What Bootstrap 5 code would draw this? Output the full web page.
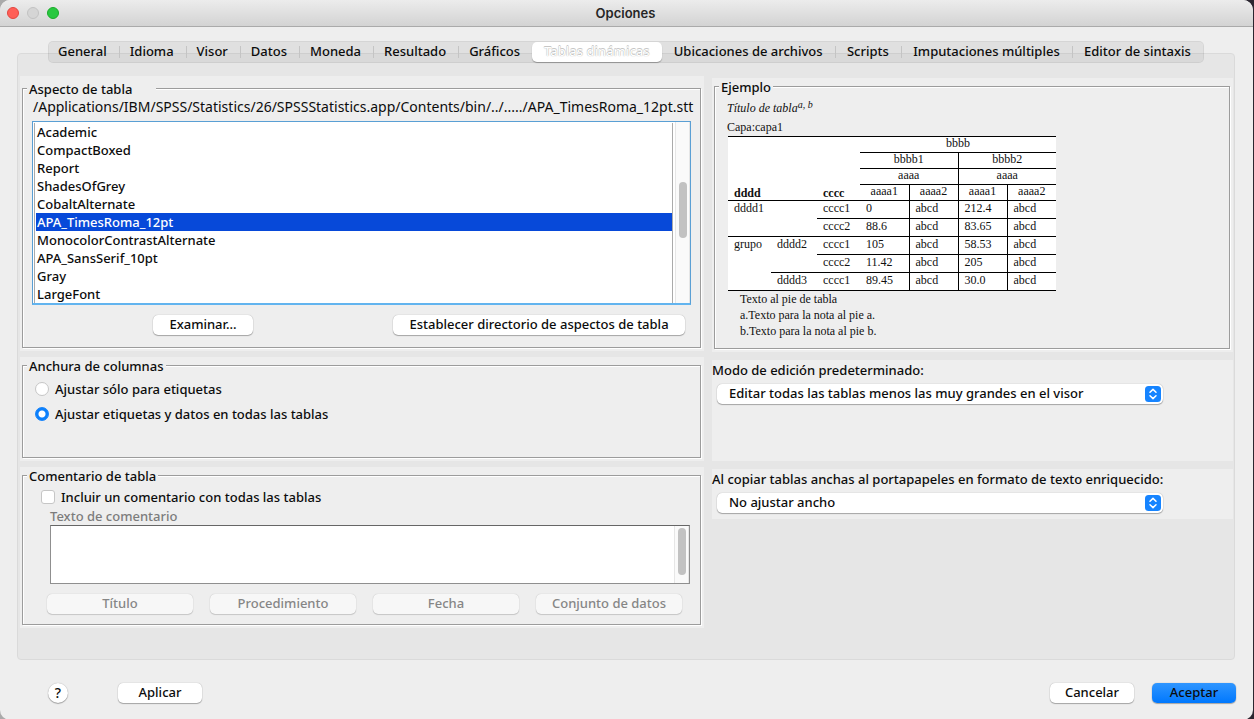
<!DOCTYPE html>
<html lang="es">
<head>
<meta charset="utf-8">
<meta name="viewport" content="width=device-width, initial-scale=1">
<title>Opciones</title>
<link href="https://cdn.jsdelivr.net/npm/bootstrap@5.3.0/dist/css/bootstrap.min.css" rel="stylesheet">
<style>
:root { --face: #eee; --line: #9c9c9c; --ink: #0c0c0c; }
body { background: linear-gradient(90deg, #aaa 50%, #2b2630 50%); color: var(--ink);
  font-family: "Noto Sans", "Open Sans", sans-serif; font-size: 13px; font-weight: 500; line-height: 18px; }
button, select, textarea, input { color: inherit; font: inherit; }
.window { background: var(--face); border-radius: 10px; margin-right: 1px; min-height: 100vh; overflow: hidden; }
.titlebar { height: 27px; background: linear-gradient(#ececec, #d3d3d3); border-bottom: 1px solid #aaa; padding: 0 7px; }
.titlebar h1 { font: 600 13px/26px Inter, "Liberation Sans", sans-serif; color: #262626; padding-right: 54px; }
.light { width: 12px; height: 12px; border-radius: 50%; border: 1px solid #c2c2c2; background: #d5d5d5; padding: 0; }
.light-close { background: #ff5f57; border-color: #e2463f; }
.light-zoom { background: #28c840; border-color: #1aab29; }

.tabstrip { margin: 14px 49px -10px 48px; height: 22px; background: rgba(0,0,0,.055); border: 1px solid rgba(0,0,0,.05); border-radius: 5px; z-index: 1; }
.tabstrip button { border: 0; background: none; padding: 0 12px 2px 11px; line-height: 18px; white-space: nowrap; position: relative; }
.tabstrip button:first-child { padding-left: 9px; }
.tabstrip button.active ~ button { flex: 1 1 auto; padding: 0 0 2px; }
.tabstrip button.parted::before { content: ""; position: absolute; left: 0; top: 4px; height: 12px; border-left: 1px solid #c4c4c4; }
.tabstrip button.active { padding: 0 12px 2px; background: #fff; border-radius: 5px; color: #fff; text-shadow: 0 0 1px #999, 0 -1px 0 #ccc; box-shadow: 0 1px 1px rgba(0,0,0,.3); }

.pane { margin: 0 18px 0 17px; background: #e6e6e6; border: 1px solid #dadada; border-radius: 4px; padding: 22px 1px 31px 2px; }
.halves { display: grid; grid-template-columns: minmax(0, 684fr) minmax(0, 521fr); gap: 8px; align-items: start; }
.left-half { gap: 6px; }
.right-half { gap: 8px; padding-top: 2px; }
.block { background: var(--face); }
.framed { padding: 0 3px 3px 2px; }
fieldset.etched { border: 1px solid var(--line); box-shadow: 1px 1px 0 #fff, inset 1px 1px 0 #fff; }
.etched legend { float: none; width: auto; margin: 0 0 0 4px; padding: 1px 2px 0; font-size: 13px; line-height: 16px; background: var(--face); }
.path { font-size: 14px; font-weight: 400; padding: 1px 0 0 10px; }

.listbox { border: 1px solid #5a9fd4; border-bottom: 2px solid #62b4ef; background: #fff; margin: 5px 9px 0; }
.listbox select { border: 0; border-left: 1px solid #aaa; border-right: 1px solid #aaa; border-radius: 0; margin: 1px 0 0 1px; padding: 0; height: 180px; overflow: hidden; background: #fff; outline: 0; scrollbar-width: none; }
.listbox select::-webkit-scrollbar { display: none; }
.listbox option { height: 18px; min-height: 18px; padding: 0 2px 0 1px; font-weight: 500; line-height: 18px; margin-left: 1px; }
.listbox option:checked { background: #0749d9 linear-gradient(#0749d9, #0749d9); color: #fff; }
.list-actions { padding: 10px 15px 12px 130px; }
.track { width: 15px; margin-left: 2px; background: #fafafa; border: 1px solid #e6e6e6; border-width: 0 1px; padding: 0 3px; }
.thumb { width: 8px; border-radius: 4px; background: #c2c2c2; }

.push { border: 0; border-radius: 5px; background: #fff; height: 20px; line-height: 18px; padding: 0 4px 2px; box-shadow: 0 0 1px rgba(0,0,0,.35), 0 1px 1px rgba(0,0,0,.28); white-space: nowrap; }
.push:disabled { background: #f7f7f7; color: #868686; box-shadow: 0 0 1px rgba(0,0,0,.25), 0 1px 1px rgba(0,0,0,.15); }
.push-84 { width: 84px; }
.push-100 { width: 100px; }
.push-292 { width: 292px; }
.push-main { background: linear-gradient(#2f96ff, #0078fe); }
.help { width: 20px; border-radius: 50%; font-size: 14px; padding: 0; }

.form-check-input.tick { width: 14px; height: 14px; margin: 0; float: none; border: 1px solid #c6c6c6; background-color: #fff; flex: none; }
.form-check-input.tick[type=checkbox] { border-radius: 3px; }
.form-check-input.tick:checked { border-color: #1583fb; background: radial-gradient(circle, #fff 3px, #0c80fc 4px); }
.tick + label { padding-left: 6px; }
.choices { gap: 7px; padding: 6px 12px 34px; }
.comment { padding: 4px 18px 10px; }
.comment-text { margin: 0 -8px 10px 9px; }
.hint { color: #7c7c7c; padding-top: 1px; }
.memo { border: 1px solid #8f8f8f; border-top-color: #666; background: #fff; height: 59px; }
.memo textarea { border: 0; resize: none; background: none; outline: 0; }
.four { display: grid; grid-template-columns: repeat(4, 1fr); gap: 17px; margin-left: 6px; }

.option-label { padding: 1px 0 5px; }
.popup { width: 446px; max-width: 100%; margin-left: 5px; }
.popup select { appearance: none; width: 100%; text-align: left; padding: 0 30px 2px 12px; }
.popup svg { position: absolute; right: 2px; top: 2px; pointer-events: none; }
.edit-mode { padding-bottom: 57px; }
.copy-mode { padding-bottom: 6px; }

.sample { font: 12px/17px "Liberation Serif", "Times New Roman", serif; padding: 5px 13px 9px 12px; color: #111; }
.sample sup { font-size: 10px; top: -4px; line-height: 1; }
.layer { padding-top: 2px; }
.pivot { width: 328px; margin-left: 1px; table-layout: fixed; border-collapse: collapse; background: #fff; line-height: 13px; }
.pivot th, .pivot td { padding: 0 0 0 6px; border: 0 solid #000; height: 16px; vertical-align: top; white-space: nowrap; }
.pivot th { font-weight: 400; text-align: center; padding: 0; }
.pivot th.stub { font-weight: 700; text-align: left; vertical-align: bottom; padding-left: 6px; }
.pivot tbody tr { height: 18px; }
.pivot tbody td { line-height: 15px; }
.pivot thead tr:first-child > * , .pivot .t { border-top-width: 1px; }
.pivot .r { border-right-width: 1px; }
.pivot tbody { border: 1px solid #000; border-width: 1px 0; }
.notes { padding-left: 13px; line-height: 16px; }
.footer-bar { padding: 23px 17px 17px 48px; }
.apply { margin-left: 50px; }
.closing { gap: 18px; }
</style>
</head>
<body>
<div class="window d-flex flex-column">
  <header class="titlebar d-flex align-items-center">
    <div class="d-flex gap-2">
      <button class="light light-close" aria-label="Cerrar"></button>
      <button class="light" aria-label="Minimizar" disabled></button>
      <button class="light light-zoom" aria-label="Ampliar"></button>
    </div>
    <h1 class="m-0 flex-grow-1 text-center">Opciones</h1>
  </header>

  <nav class="tabstrip d-flex position-relative" role="tablist">
    <button role="tab">General</button>
    <button role="tab" class="parted">Idioma</button>
    <button role="tab" class="parted">Visor</button>
    <button role="tab" class="parted">Datos</button>
    <button role="tab" class="parted">Moneda</button>
    <button role="tab" class="parted">Resultado</button>
    <button role="tab" class="parted">Gráficos</button>
    <button role="tab" class="active" aria-selected="true">Tablas dinámicas</button>
    <button role="tab">Ubicaciones de archivos</button>
    <button role="tab" class="parted">Scripts</button>
    <button role="tab" class="parted">Imputaciones múltiples</button>
    <button role="tab" class="parted">Editor de sintaxis</button>
  </nav>

  <main class="pane">
    <div class="halves">
      <div class="left-half d-flex flex-column">
        <section class="block framed pt-1">
          <fieldset class="etched">
            <legend class="pe-4">Aspecto de tabla</legend>
            <div class="path text-nowrap">/Applications/IBM/SPSS/Statistics/26/SPSSStatistics.app/Contents/bin/../...../APA_TimesRoma_12pt.stt</div>
            <div class="listbox d-flex">
              <select class="flex-grow-1" size="10" aria-label="Aspecto de tabla">
                <option>Academic</option>
                <option>CompactBoxed</option>
                <option>Report</option>
                <option>ShadesOfGrey</option>
                <option>CobaltAlternate</option>
                <option selected>APA_TimesRoma_12pt</option>
                <option>MonocolorContrastAlternate</option>
                <option>APA_SansSerif_10pt</option>
                <option>Gray</option>
                <option>LargeFont</option>
              </select>
              <div class="track" aria-hidden="true"><div class="thumb" style="height:56px;margin-top:60px"></div></div>
            </div>
            <div class="list-actions d-flex justify-content-between">
              <button class="push push-100">Examinar...</button>
              <button class="push push-292">Establecer directorio de aspectos de tabla</button>
            </div>
          </fieldset>
        </section>

        <section class="block framed">
          <fieldset class="etched">
            <legend>Anchura de columnas</legend>
            <div class="choices d-flex flex-column">
              <div class="d-flex align-items-center">
                <input class="form-check-input tick" type="radio" name="ancho" id="soloEtiquetas">
                <label for="soloEtiquetas">Ajustar sólo para etiquetas</label>
              </div>
              <div class="d-flex align-items-center">
                <input class="form-check-input tick" type="radio" name="ancho" id="etiquetasDatos" checked>
                <label for="etiquetasDatos">Ajustar etiquetas y datos en todas las tablas</label>
              </div>
            </div>
          </fieldset>
        </section>

        <section class="block framed">
          <fieldset class="etched">
            <legend>Comentario de tabla</legend>
            <div class="comment">
              <div class="d-flex align-items-center">
                <input class="form-check-input tick" type="checkbox" id="incluir">
                <label for="incluir">Incluir un comentario con todas las tablas</label>
              </div>
              <div class="comment-text">
                <label class="hint d-block" for="comentario">Texto de comentario</label>
                <div class="memo d-flex">
                  <textarea class="flex-grow-1" id="comentario" disabled></textarea>
                  <div class="track" aria-hidden="true"><div class="thumb" style="height:47px;margin-top:2px"></div></div>
                </div>
              </div>
              <div class="four">
                <button class="push" disabled>Título</button>
                <button class="push" disabled>Procedimiento</button>
                <button class="push" disabled>Fecha</button>
                <button class="push" disabled>Conjunto de datos</button>
              </div>
            </div>
          </fieldset>
        </section>
      </div>

      <div class="right-half d-flex flex-column">
        <section class="block framed">
          <fieldset class="etched">
            <legend>Ejemplo</legend>
            <div class="sample">
              <div class="fst-italic">Título de tabla<sup>a, b</sup></div>
              <div class="layer">Capa:capa1</div>
              <table class="pivot">
                <colgroup><col style="width:43px"><col style="width:46px"><col style="width:43px"><col style="width:49px"><col style="width:49px"><col style="width:49px"><col style="width:49px"></colgroup>
                <thead>
                  <tr><th class="stub" colspan="2" rowspan="4">dddd</th><th class="stub" rowspan="4">cccc</th><th colspan="4">bbbb</th></tr>
                  <tr><th class="t r" colspan="2">bbbb1</th><th class="t" colspan="2">bbbb2</th></tr>
                  <tr><th class="t r" colspan="2">aaaa</th><th class="t" colspan="2">aaaa</th></tr>
                  <tr><th class="t r">aaaa1</th><th class="t r">aaaa2</th><th class="t r">aaaa1</th><th class="t">aaaa2</th></tr>
                </thead>
                <tbody>
                  <tr><td colspan="2" rowspan="2">dddd1</td><td>cccc1</td><td class="r">0</td><td class="r">abcd</td><td class="r">212.4</td><td>abcd</td></tr>
                  <tr><td class="t">cccc2</td><td class="t r">88.6</td><td class="t r">abcd</td><td class="t r">83.65</td><td class="t">abcd</td></tr>
                  <tr><td class="t" rowspan="3">grupo</td><td class="t" rowspan="2">dddd2</td><td class="t">cccc1</td><td class="t r">105</td><td class="t r">abcd</td><td class="t r">58.53</td><td class="t">abcd</td></tr>
                  <tr><td class="t">cccc2</td><td class="t r">11.42</td><td class="t r">abcd</td><td class="t r">205</td><td class="t">abcd</td></tr>
                  <tr><td class="t">dddd3</td><td class="t">cccc1</td><td class="t r">89.45</td><td class="t r">abcd</td><td class="t r">30.0</td><td class="t">abcd</td></tr>
                </tbody>
              </table>
              <div class="notes">
                <div>Texto al pie de tabla</div>
                <div>a.Texto para la nota al pie a.</div>
                <div>b.Texto para la nota al pie b.</div>
              </div>
            </div>
          </fieldset>
        </section>

        <section class="block edit-mode">
          <label class="option-label d-block" for="modo">Modo de edición predeterminado:</label>
          <div class="popup position-relative">
            <select class="push d-block" id="modo"><option>Editar todas las tablas menos las muy grandes en el visor</option></select>
            <svg width="16" height="16" viewBox="0 0 16 16"><rect width="16" height="16" rx="3.5" fill="#1684ff"/><path d="M5 6.2 8 3.4l3 2.8M5 9.8l3 2.8 3-2.8" fill="none" stroke="#fff" stroke-width="1.5" stroke-linecap="round" stroke-linejoin="round"/></svg>
          </div>
        </section>

        <section class="block copy-mode">
          <label class="option-label d-block" for="copiar">Al copiar tablas anchas al portapapeles en formato de texto enriquecido:</label>
          <div class="popup position-relative">
            <select class="push d-block" id="copiar"><option>No ajustar ancho</option></select>
            <svg width="16" height="16" viewBox="0 0 16 16"><rect width="16" height="16" rx="3.5" fill="#1684ff"/><path d="M5 6.2 8 3.4l3 2.8M5 9.8l3 2.8 3-2.8" fill="none" stroke="#fff" stroke-width="1.5" stroke-linecap="round" stroke-linejoin="round"/></svg>
          </div>
        </section>
      </div>
    </div>
  </main>

  <footer class="footer-bar d-flex align-items-center">
    <button class="push help" aria-label="Ayuda">?</button>
    <button class="push push-84 apply">Aplicar</button>
    <div class="closing d-flex ms-auto">
      <button class="push push-84">Cancelar</button>
      <button class="push push-84 push-main">Aceptar</button>
    </div>
  </footer>
</div>
<script src="https://cdn.jsdelivr.net/npm/bootstrap@5.3.0/dist/js/bootstrap.bundle.min.js"></script>
</body>
</html>
